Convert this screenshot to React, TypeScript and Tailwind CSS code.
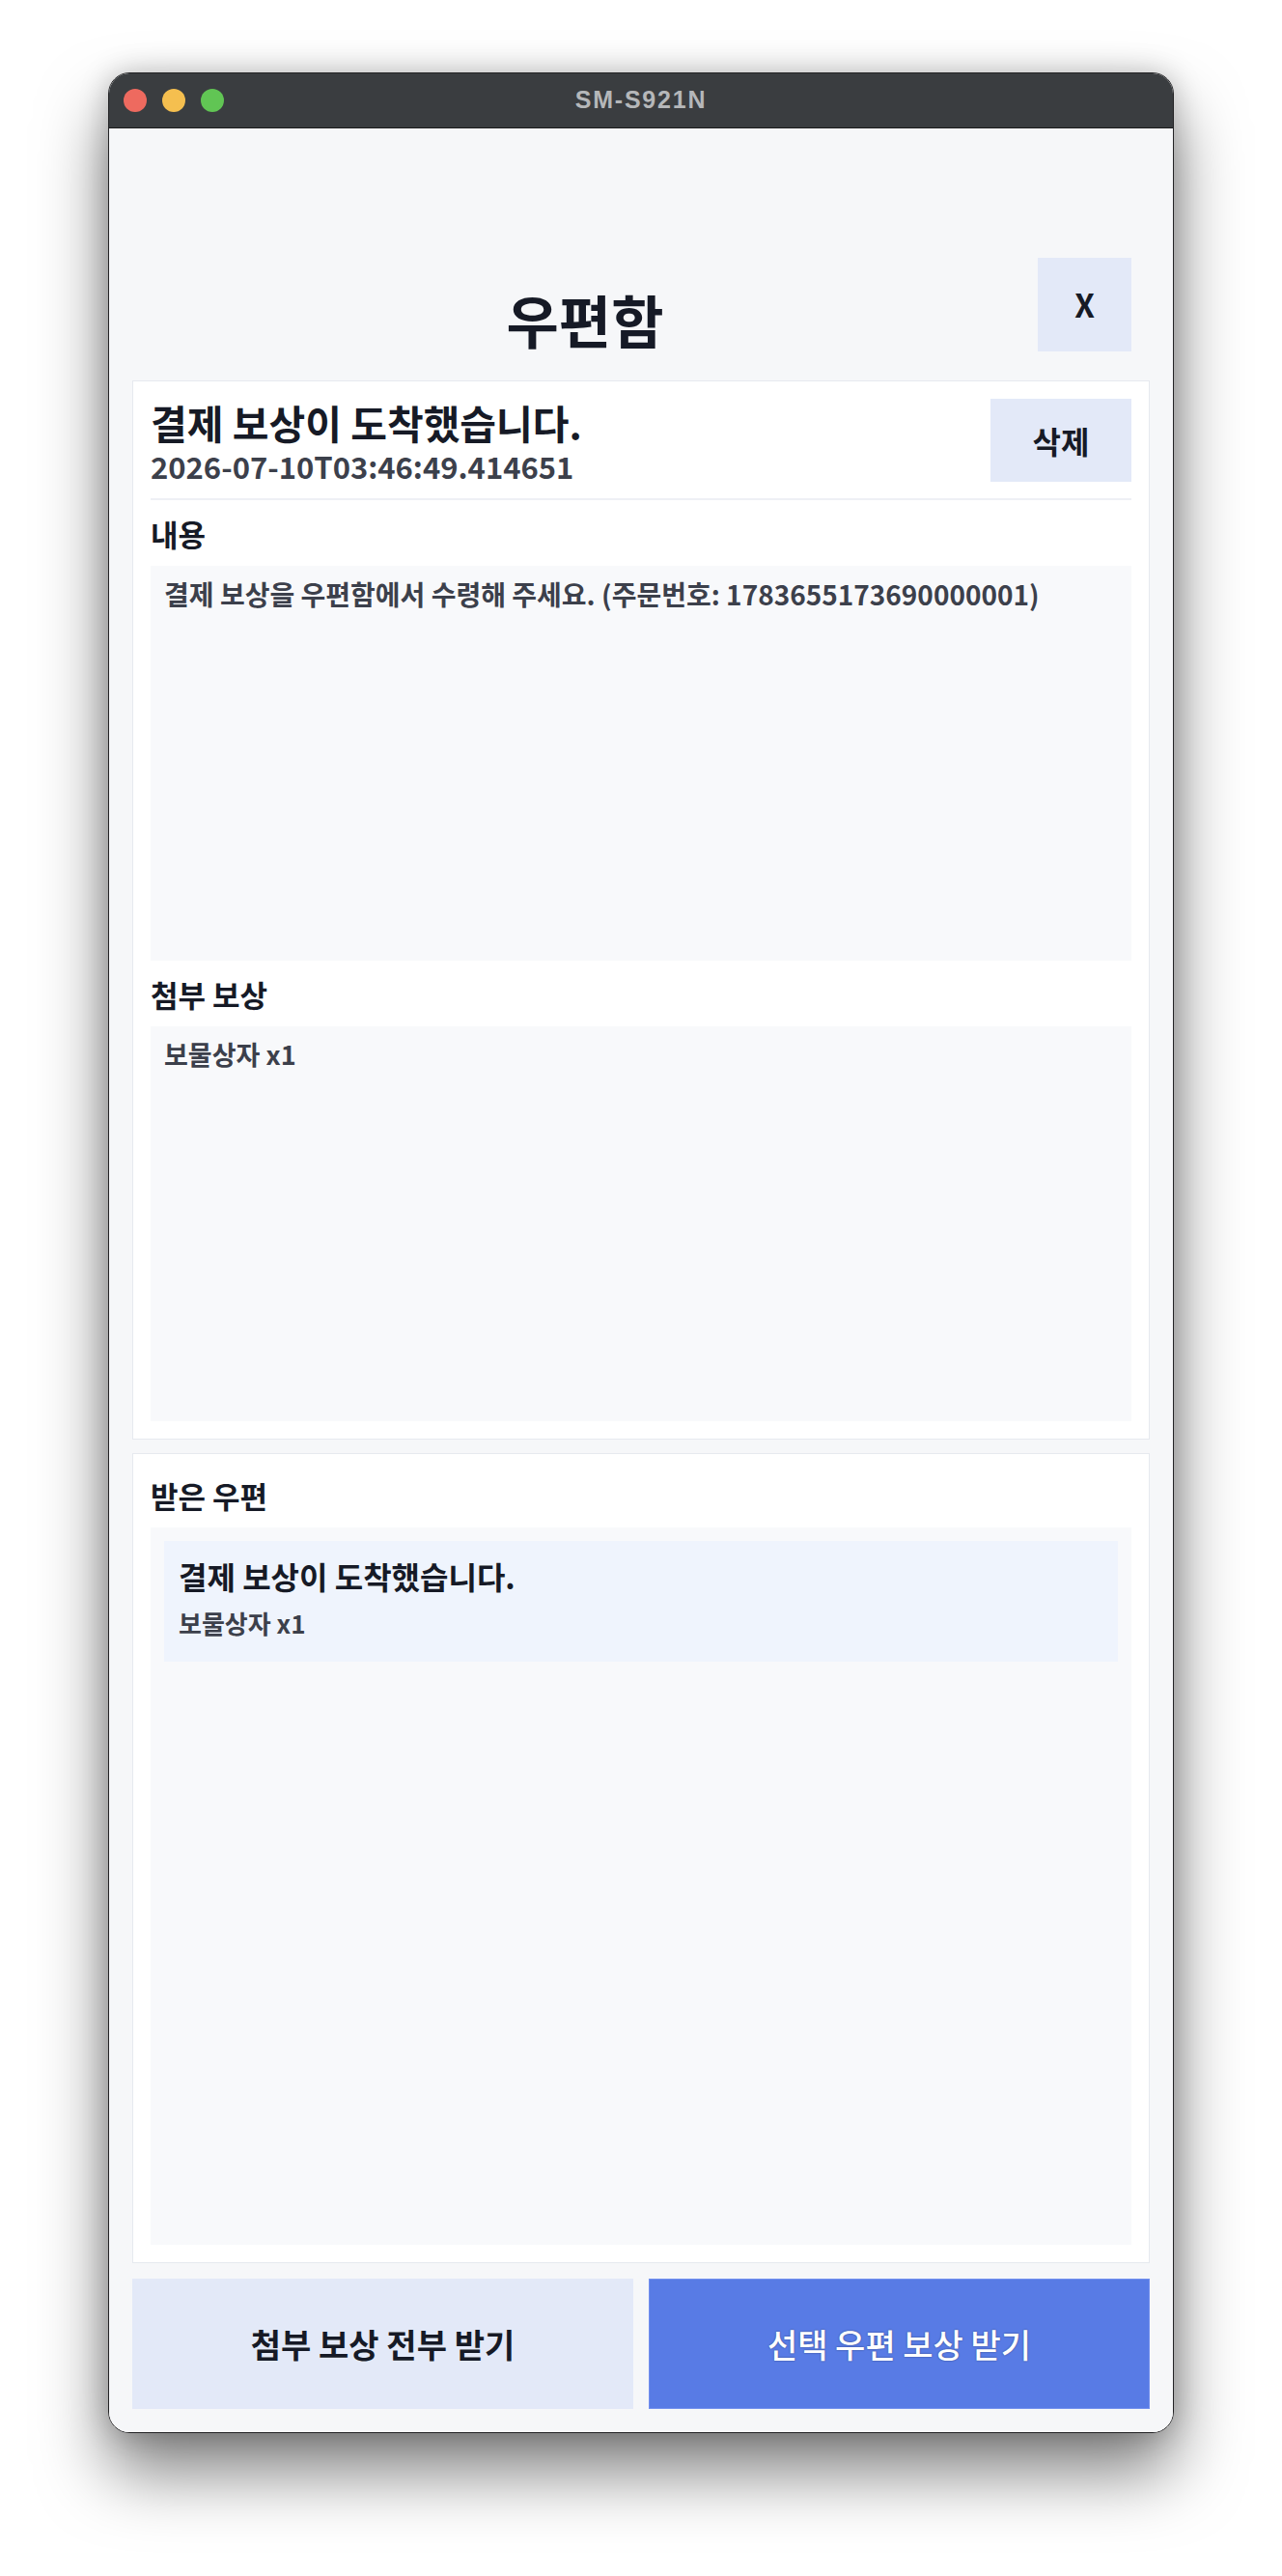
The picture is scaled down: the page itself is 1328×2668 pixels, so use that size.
import React from "react"

const mails = [
  {
    id: 1,
    title: "결제 보상이 도착했습니다.",
    createdAt: "2026-07-10T03:46:49.414651",
    body: "결제 보상을 우편함에서 수령해 주세요. (주문번호: 1783655173690000001)",
    rewards: "보물상자 x1",
  },
]

function TrafficLights() {
  return (
    <div className="flex items-center gap-[16px] pl-[15px]">
      <span className="block h-[24px] w-[24px] rounded-full bg-[#ee6a5f]" />
      <span className="block h-[24px] w-[24px] rounded-full bg-[#f5bf4f]" />
      <span className="block h-[24px] w-[24px] rounded-full bg-[#61c554]" />
    </div>
  )
}

export default function App() {
  const selected = mails[0]

  return (
    <div className="min-h-[2668px] w-full bg-white pt-[75px] pl-[112px] [font-family:'Noto_Sans_CJK_KR','Noto_Sans',sans-serif]">
      {/* device window */}
      <div className="flex h-[2445px] w-[1104px] flex-col overflow-hidden rounded-[22px] border border-[#232325] shadow-[0_40px_70px_rgba(0,0,0,0.5),0_0_30px_rgba(0,0,0,0.22)]">
        <div className="relative flex h-[57px] shrink-0 items-center border-b border-[#1b1b1c] bg-[#3a3d40]">
          <TrafficLights />
          <div className="absolute inset-0 flex items-center justify-center text-[25px] font-bold tracking-[1.8px] text-[#b5b7b9] [font-family:'Liberation_Sans',sans-serif]">
            SM-S921N
          </div>
        </div>

        <div className="flex flex-1 flex-col bg-[#f6f7f9] px-[24px] pt-[134px] pb-[24px]">
          {/* header */}
          <div className="flex h-[97px] items-end pr-[19px]">
            <h1 className="flex-1 text-center text-[59px] font-bold leading-[67px] text-[#161a26]">우편함</h1>
            <button className="flex h-[97px] w-[97px] items-center justify-center bg-[#e3e9f8] text-[33px] font-bold text-[#161a26]">
              X
            </button>
          </div>

          {/* detail card */}
          <div className="mt-[30px] border border-[#e6e9ef] bg-white p-[18px]">
            <div className="flex h-[105px] items-start justify-between border-b-2 border-[#eef0f5]">
              <div className="flex flex-col">
                <div className="text-[41px] font-bold leading-[48px] text-[#161a26]">{selected.title}</div>
                <div className="mt-[5px] text-[31px] font-bold leading-[33px] text-[#3c404b]">{selected.createdAt}</div>
              </div>
              <button className="flex h-[86px] w-[146px] items-center justify-center bg-[#e3e9f8] text-[32px] font-bold text-[#161a26]">
                삭제
              </button>
            </div>

            <div className="mt-[15px] mb-[13px] text-[31px] font-bold leading-[40px] text-[#161a26]">내용</div>
            <div className="h-[409px] bg-[#f8f9fb] px-[14px] pt-[10px] text-[28px] font-bold leading-[38px] text-[#3c404b]">
              {selected.body}
            </div>

            <div className="mt-[15px] mb-[13px] text-[31px] font-bold leading-[40px] text-[#161a26]">첨부 보상</div>
            <div className="h-[409px] bg-[#f8f9fb] px-[14px] pt-[10px] text-[27px] font-bold leading-[38px] text-[#3c404b]">
              {selected.rewards}
            </div>
          </div>

          {/* list card */}
          <div className="mt-[14px] flex flex-1 flex-col border border-[#e6e9ef] bg-white p-[18px]">
            <div className="mt-[5px] mb-[13px] text-[31px] font-bold leading-[40px] text-[#161a26]">받은 우편</div>
            <div className="flex flex-1 flex-col bg-[#f8f9fb] p-[14px]">
              {mails.map((m) => (
                <div key={m.id} className="flex h-[125px] flex-col bg-[#eff4fd] px-[15px] pt-[15px]">
                  <div className="text-[32px] font-bold leading-[42px] text-[#161a26]">{m.title}</div>
                  <div className="mt-[11px] text-[26px] font-bold leading-[34px] text-[#3c404b]">{m.rewards}</div>
                </div>
              ))}
            </div>
          </div>

          {/* actions */}
          <div className="mt-[16px] grid h-[135px] grid-cols-2 gap-[16px]">
            <button className="flex items-center justify-center bg-[#e3e9f8] text-[34px] font-bold text-[#161a26]">
              첨부 보상 전부 받기
            </button>
            <button className="flex items-center justify-center border border-[#7390ee] bg-[#587be5] text-[34px] font-medium text-white [text-shadow:0_0_2px_rgba(0,0,0,0.45)]">
              선택 우편 보상 받기
            </button>
          </div>
        </div>
      </div>
    </div>
  )
}
